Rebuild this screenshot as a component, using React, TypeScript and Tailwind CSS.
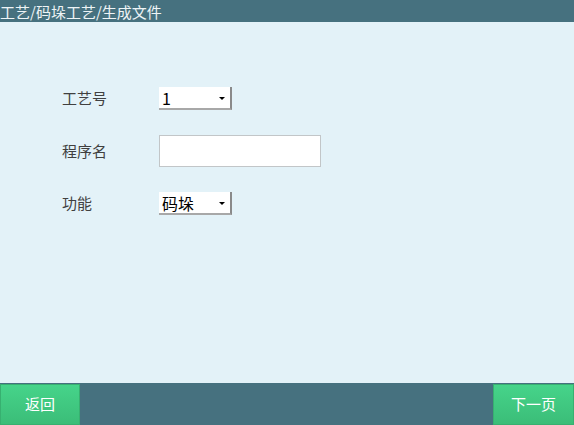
import { useState } from "react";

const Select = ({ value }: { value: string }) => (
  <div className="relative w-[73px] h-[23px] bg-white border-r-2 border-b-2 border-r-[#8a8a8a] border-b-[#a8a8a8] flex items-center pl-[3px] text-[16px] text-black">
    <span className="leading-none">{value}</span>
    <span className="absolute right-[5px] top-[10px] w-0 h-0 border-l-[3px] border-r-[3px] border-t-[3px] border-l-transparent border-r-transparent border-t-black" />
  </div>
);

export default function App() {
  const [name, setName] = useState("");
  return (
    <div
      className="w-[574px] h-[425px] flex flex-col bg-[#e3f2f8] overflow-hidden"
      style={{ fontFamily: '"Noto Sans CJK SC", "Liberation Sans", sans-serif' }}
    >
      <div className="h-[22px] bg-[#46717f] text-[#eef4f6] text-[15px] leading-[24px] shrink-0">
        工艺/码垛工艺/生成文件
      </div>
      <div className="flex-1 flex flex-col pt-[65px] pl-[62px] text-[15px] text-[#404040]">
        <div className="flex items-center h-[23px]">
          <span className="w-[97px]">工艺号</span>
          <Select value="1" />
        </div>
        <div className="flex items-center h-[32px] mt-[25px]">
          <span className="w-[97px]">程序名</span>
          <input
            value={name}
            onChange={(e) => setName(e.target.value)}
            className="w-[162px] h-[32px] bg-white border border-[#c2c6c8] outline-none px-1"
          />
        </div>
        <div className="flex items-center h-[23px] mt-[25px]">
          <span className="w-[97px]">功能</span>
          <Select value="码垛" />
        </div>
      </div>
      <div className="h-[42px] bg-[#46717f] flex justify-between items-end shrink-0">
        <button className="w-[80px] h-[41px] bg-gradient-to-b from-[#46d48a] to-[#3bbd78] border border-[#37b070] text-white text-[15px]">
          返回
        </button>
        <button className="w-[81px] h-[41px] bg-gradient-to-b from-[#46d48a] to-[#3bbd78] border border-[#37b070] text-white text-[15px]">
          下一页
        </button>
      </div>
    </div>
  );
}
